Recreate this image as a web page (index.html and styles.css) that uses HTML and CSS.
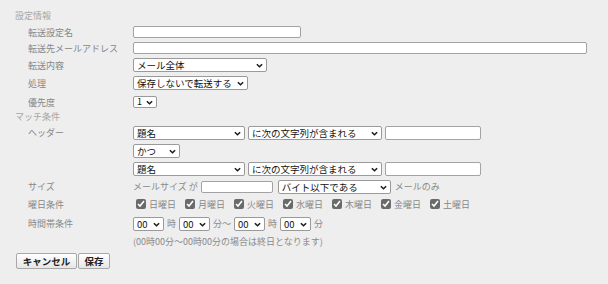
FILE: index.html
```html
<!DOCTYPE html>
<html lang="ja">
<head>
<meta charset="utf-8">
<link rel="stylesheet" href="styles.css">
</head>
<body>
<form class="form">
  <div class="title t1">設定情報</div>
  <div class="row r1"><span class="label">転送設定名</span><div class="ctrl"><input class="in w168" type="text"></div></div>
  <div class="row r2"><span class="label">転送先メールアドレス</span><div class="ctrl"><input class="in w454" type="text"></div></div>
  <div class="row r3"><span class="label">転送内容</span><div class="ctrl"><span class="sw"><select class="sel w134"><option>メール全体</option></select><svg class="chev" viewBox="0 0 8 5" width="7" height="5"><path d="M1 1l3 3 3-3" stroke="#1a1a1a" stroke-width="1.7" fill="none"/></svg></span></div></div>
  <div class="row r3"><span class="label">処理</span><div class="ctrl"><span class="sw"><select class="sel w115"><option>保存しないで転送する</option></select><svg class="chev" viewBox="0 0 8 5" width="7" height="5"><path d="M1 1l3 3 3-3" stroke="#1a1a1a" stroke-width="1.7" fill="none"/></svg></span></div></div>
  <div class="row r5"><span class="label">優先度</span><div class="ctrl"><span class="sw"><select class="sel sel-s w24"><option>1</option></select><svg class="chev" viewBox="0 0 8 5" width="7" height="5"><path d="M1 1l3 3 3-3" stroke="#1a1a1a" stroke-width="1.7" fill="none"/></svg></span></div></div>
  <div class="title t2">マッチ条件</div>
  <div class="row rh"><span class="label lh">ヘッダー</span>
    <div class="ctrl stack">
      <div class="line">
        <span class="sw"><select class="sel w112"><option>題名</option></select><svg class="chev" viewBox="0 0 8 5" width="7" height="5"><path d="M1 1l3 3 3-3" stroke="#1a1a1a" stroke-width="1.7" fill="none"/></svg></span>
        <span class="sw"><select class="sel w134"><option>に次の文字列が含まれる</option></select><svg class="chev" viewBox="0 0 8 5" width="7" height="5"><path d="M1 1l3 3 3-3" stroke="#1a1a1a" stroke-width="1.7" fill="none"/></svg></span>
        <input class="in in-h w96" type="text">
      </div>
      <div class="line">
        <span class="sw"><select class="sel w47"><option>かつ</option></select><svg class="chev" viewBox="0 0 8 5" width="7" height="5"><path d="M1 1l3 3 3-3" stroke="#1a1a1a" stroke-width="1.7" fill="none"/></svg></span>
      </div>
      <div class="line">
        <span class="sw"><select class="sel w112"><option>題名</option></select><svg class="chev" viewBox="0 0 8 5" width="7" height="5"><path d="M1 1l3 3 3-3" stroke="#1a1a1a" stroke-width="1.7" fill="none"/></svg></span>
        <span class="sw"><select class="sel w134"><option>に次の文字列が含まれる</option></select><svg class="chev" viewBox="0 0 8 5" width="7" height="5"><path d="M1 1l3 3 3-3" stroke="#1a1a1a" stroke-width="1.7" fill="none"/></svg></span>
        <input class="in in-h w96" type="text">
      </div>
    </div>
  </div>
  <div class="row rs"><span class="label">サイズ</span><div class="ctrl">
    <span class="txt">メールサイズ が</span>
    <input class="in w72" type="text">
    <span class="sw sw-size"><select class="sel w113"><option>バイト以下である</option></select><svg class="chev" viewBox="0 0 8 5" width="7" height="5"><path d="M1 1l3 3 3-3" stroke="#1a1a1a" stroke-width="1.7" fill="none"/></svg></span>
    <span class="txt">メールのみ</span>
  </div></div>
  <div class="row rw"><span class="label">曜日条件</span><div class="ctrl days">
    <label class="day"><input type="checkbox" checked>日曜日</label>
    <label class="day"><input type="checkbox" checked>月曜日</label>
    <label class="day"><input type="checkbox" checked>火曜日</label>
    <label class="day"><input type="checkbox" checked>水曜日</label>
    <label class="day"><input type="checkbox" checked>木曜日</label>
    <label class="day"><input type="checkbox" checked>金曜日</label>
    <label class="day"><input type="checkbox" checked>土曜日</label>
  </div></div>
  <div class="row rt"><span class="label">時間帯条件</span><div class="ctrl time">
    <span class="sw"><select class="sel w31"><option>00</option></select><svg class="chev" viewBox="0 0 8 5" width="7" height="5"><path d="M1 1l3 3 3-3" stroke="#1a1a1a" stroke-width="1.7" fill="none"/></svg></span>
    <span class="txt">時</span>
    <span class="sw"><select class="sel w31"><option>00</option></select><svg class="chev" viewBox="0 0 8 5" width="7" height="5"><path d="M1 1l3 3 3-3" stroke="#1a1a1a" stroke-width="1.7" fill="none"/></svg></span>
    <span class="txt">分～</span>
    <span class="sw"><select class="sel w31"><option>00</option></select><svg class="chev" viewBox="0 0 8 5" width="7" height="5"><path d="M1 1l3 3 3-3" stroke="#1a1a1a" stroke-width="1.7" fill="none"/></svg></span>
    <span class="txt">時</span>
    <span class="sw"><select class="sel w31"><option>00</option></select><svg class="chev" viewBox="0 0 8 5" width="7" height="5"><path d="M1 1l3 3 3-3" stroke="#1a1a1a" stroke-width="1.7" fill="none"/></svg></span>
    <span class="txt">分</span>
  </div></div>
  <div class="row rn"><span class="label"></span><div class="ctrl"><span class="txt">(00時00分～00時00分の場合は終日となります)</span></div></div>
  <div class="buttons"><button type="button" class="btn w61">キャンセル</button><button type="button" class="btn w32">保存</button></div>
</form>
</body>
</html>
```
FILE: styles.css
```css
html, body {
  margin: 0;
  padding: 0;
  background: #eeeeee;
}
body {
  font-family: "Noto Sans CJK JP", "Noto Sans", sans-serif;
  font-size: 9px;
  color: #888;
}
.form {
  padding: 8px 0 0 15px;
  display: flex;
  flex-direction: column;
}
.title {
  color: #a6a6a6;
  font-size: 9px;
  line-height: 14px;
}
.t1 { height: 15px; line-height: 15px; }
.t2 { height: 14px; }
.row {
  display: grid;
  grid-template-columns: 105px 1fr;
  padding-left: 13px;
  align-items: center;
}
.label {
  color: #888;
  font-size: 9px;
  white-space: nowrap;
}
.ctrl {
  display: flex;
  align-items: center;
  gap: 3px;
}
.r1 { height: 17px; padding-top: 1px; box-sizing: border-box; }
.r2 { height: 16px; }
.r3 { height: 18px; }
.r5 { height: 18px; padding-top: 2px; box-sizing: border-box; }
.rh { align-items: start; padding-top: 2px; padding-bottom: 2px; }
.lh { line-height: 14px; }
.stack { flex-direction: column; align-items: flex-start; gap: 4px; }
.line { display: flex; gap: 3px; align-items: center; }
.rs { height: 17px; }
.rw { height: 18px; }
.rt { height: 21px; }
.rn { height: 15px; }

.in {
  box-sizing: border-box;
  height: 12px;
  border: 1px solid #a3a3a3;
  border-radius: 2px;
  background: #fff;
  padding: 0 2px;
  margin: 0;
  font-size: 9px;
  font-family: inherit;
}
.in-h { height: 14px; }

.sw {
  position: relative;
  display: inline-flex;
}
.sel {
  -webkit-appearance: none;
  appearance: none;
  box-sizing: border-box;
  height: 14px;
  border: 1px solid #9a9a9a;
  border-radius: 2px;
  background: #fff;
  color: #111;
  padding: 0 10px 0 3px;
  margin: 0;
  font-size: 9.5px;
  line-height: 12px;
  font-family: inherit;
  overflow: hidden;
  white-space: nowrap;
}
.sel-s { height: 12px; font-size: 9px; line-height: 10px; }
.chev {
  position: absolute;
  right: 4px;
  top: 50%;
  margin-top: -2px;
  pointer-events: none;
}
.txt { color: #8a8a8a; font-size: 9px; white-space: nowrap; }
.sw-size { margin-left: 2px; }
.rs .txt:last-child { margin-left: 1px; }

.days { gap: 5px; }
.day {
  display: flex;
  align-items: center;
  gap: 3px;
  color: #888;
  font-size: 9px;
  margin-left: 3px;
  margin-right: 1px;
}
.day input {
  width: 10px;
  height: 10px;
  margin: 0;
  accent-color: #6a6a6a;
}
.time { gap: 3px; }

.w168 { width: 168px; }
.w454 { width: 454px; }
.w134 { width: 134px; }
.w115 { width: 115px; }
.w24 { width: 24px; }
.w112 { width: 112px; }
.w96 { width: 96px; }
.w47 { width: 47px; }
.w72 { width: 72px; }
.w113 { width: 113px; }
.w31 { width: 31px; }
.w61 { width: 61px; }
.w32 { width: 32px; }

.buttons {
  display: flex;
  gap: 1px;
  margin-top: 4px;
  margin-left: 1px;
}
.btn {
  box-sizing: border-box;
  height: 16px;
  padding: 0;
  border: 1px solid #a8a8a8;
  border-radius: 2px;
  background: linear-gradient(#ffffff, #e6e6e6);
  color: #222;
  font-family: inherit;
  font-size: 9.5px;
  font-weight: bold;
  line-height: 14px;
}
```
